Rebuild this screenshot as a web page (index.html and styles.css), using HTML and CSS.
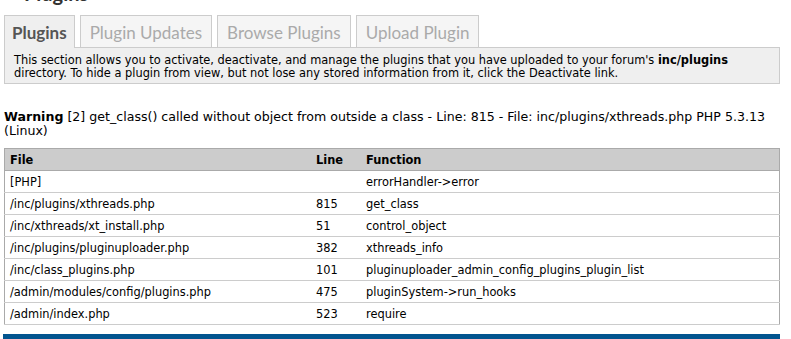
FILE: index.html
```html
<!DOCTYPE html>
<html lang="en">
<head>
    <meta charset="UTF-8">
    <title>Plugins</title>
    <link rel="stylesheet" href="styles.css">
</head>
<body>

<div class="page">
    <h2 class="title">Plugins</h2>

    <ul class="tabs">
        <li class="active">Plugins</li>
        <li>Plugin Updates</li>
        <li>Browse Plugins</li>
        <li>Upload Plugin</li>
    </ul>
    <div class="description">
        This section allows you to activate, deactivate, and manage the plugins that you have uploaded to your forum's <strong>inc/plugins</strong> directory. To hide a plugin from view, but not lose any stored information from it, click the Deactivate link.
    </div>

    <div class="warning">
        <strong>Warning</strong> [2] get_class() called without object from outside a class - Line: 815 - File: inc/plugins/xthreads.php PHP 5.3.13 (Linux)
    </div>

    <table class="trace">
        <thead>
            <tr>
                <th class="col-file">File</th>
                <th class="col-line">Line</th>
                <th>Function</th>
            </tr>
        </thead>
        <tbody>
            <tr><td>[PHP]</td><td></td><td>errorHandler-&gt;error</td></tr>
            <tr><td>/inc/plugins/xthreads.php</td><td>815</td><td>get_class</td></tr>
            <tr><td>/inc/xthreads/xt_install.php</td><td>51</td><td>control_object</td></tr>
            <tr><td>/inc/plugins/pluginuploader.php</td><td>382</td><td>xthreads_info</td></tr>
            <tr><td>/inc/class_plugins.php</td><td>101</td><td>pluginuploader_admin_config_plugins_plugin_list</td></tr>
            <tr><td>/admin/modules/config/plugins.php</td><td>475</td><td>pluginSystem-&gt;run_hooks</td></tr>
            <tr><td>/admin/index.php</td><td>523</td><td>require</td></tr>
        </tbody>
    </table>

    <div class="bluebar"></div>
</div>

</body>
</html>
```

FILE: styles.css
```css
body {
    margin: 0;
    background: #fff;
    font-family: "DejaVu Sans", Verdana, sans-serif;
    font-size: 11.4px;
    color: #000;
}
.page {
    display: flow-root;
    width: 776px;
    padding: 0 0 0 4px;
}
.title {
    margin: -17px 0 12px 20px;
    height: 20px;
    line-height: 20px;
    font-family: Lato, sans-serif;
    font-size: 20px;
    color: #333;
}
.tabs {
    list-style: none;
    margin: 0;
    padding: 0;
    display: flex;
    gap: 5px;
    height: 32px;
}
.tabs li {
    font-family: Lato, sans-serif;
    font-size: 17px;
    color: #aaa;
    background: #f5f5f5;
    border: 1px solid #ccc;
    border-bottom: none;
    padding: 0 9px;
    line-height: 33px;
    height: 31px;
}
.tabs li.active {
    color: #555;
    font-weight: bold;
    background: #efefef;
    height: 32px;
    padding: 0 7px;
}
.description {
    background: #efefef;
    border: 1px solid #ccc;
    padding: 6px 9px 3px;
    line-height: 13px;
    height: 26px;
}
.warning {
    margin-top: 26px;
    font-size: 12.6px;
    line-height: 14px;
}
.trace {
    margin-top: 10px;
    width: 100%;
    border-collapse: collapse;
    border: 1px solid #aaa;
}
.trace th {
    background: #ccc;
    text-align: left;
    font-size: 11.4px;
    height: 21px;
    padding: 0 5px;
    border-bottom: 1px solid #aaa;
}
.trace td {
    height: 21px;
    padding: 0 5px;
    border-bottom: 1px solid #ccc;
}
.col-file {
    width: 296px;
}
.col-line {
    width: 40px;
}
.bluebar {
    margin-top: 9px;
    height: 6px;
    background: #02558f;
    margin-left: -1px;
}
```
